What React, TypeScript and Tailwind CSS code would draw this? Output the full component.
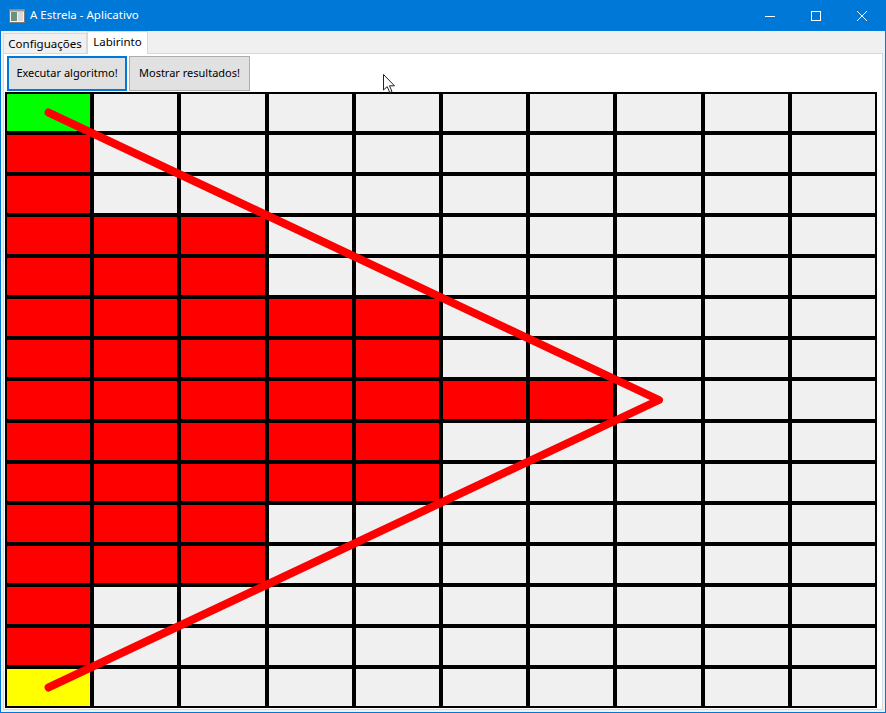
import React from "react";

// maze grid: 15 rows x 10 columns
// 0 = free, 1 = wall (red), 2 = start, 3 = goal
const ROWS = 15;
const COLS = 10;

function cellKind(r: number, c: number): number {
  if (r === 0 && c === 0) return 2;
  if (r === 14 && c === 0) return 3;
  if (c === 0 && r >= 1 && r <= 13) return 1;
  if ((c === 1 || c === 2) && r >= 3 && r <= 11) return 1;
  if ((c === 3 || c === 4) && r >= 5 && r <= 9) return 1;
  if ((c === 5 || c === 6) && r === 7) return 1;
  return 0;
}

const cellColor: Record<number, string> = {
  0: "bg-[#f0f0f0]",
  1: "bg-[#ff0000]",
  2: "bg-[#00ff00]",
  3: "bg-[#ffff00]",
};

function TitleBar() {
  return (
    <div className="h-[31px] flex items-center text-white text-[11.5px]">
      <svg width="16" height="14" viewBox="0 0 16 14" className="ml-[9px]">
        <rect x="0.5" y="0.5" width="15" height="13" fill="#f4f4f4" stroke="#7a7a7a" />
        <rect x="2" y="3" width="6" height="9" fill="#6f8f7f" />
        <rect x="9" y="3" width="5" height="9" fill="#d9d9d9" />
        <rect x="0.5" y="0.5" width="15" height="2" fill="#9a9a9a" />
      </svg>
      <span className="ml-[5px] pb-[1px]">A Estrela - Aplicativo</span>
      <div className="ml-auto flex items-center h-full">
        <div className="w-[46px] h-full flex items-center justify-center">
          <svg width="10" height="10" viewBox="0 0 10 10">
            <line x1="0" y1="5.5" x2="10" y2="5.5" stroke="white" strokeWidth="1" />
          </svg>
        </div>
        <div className="w-[46px] h-full flex items-center justify-center">
          <svg width="10" height="10" viewBox="0 0 10 10">
            <rect x="0.5" y="0.5" width="9" height="9" fill="none" stroke="white" strokeWidth="1" />
          </svg>
        </div>
        <div className="w-[46px] h-full flex items-center justify-center mr-[1px]">
          <svg width="10" height="10" viewBox="0 0 10 10">
            <path d="M0 0 L10 10 M10 0 L0 10" stroke="white" strokeWidth="1" />
          </svg>
        </div>
      </div>
    </div>
  );
}

function Maze() {
  const w = 872;
  const h = 616;
  const cw = w / COLS;
  const rh = h / ROWS;
  const pts = [
    [0.5 * cw, 0.5 * rh],
    [7.5 * cw, 7.5 * rh],
    [0.5 * cw, 14.5 * rh],
  ]
    .map((p) => p.join(","))
    .join(" ");

  return (
    <div className="relative ml-[1px] mt-[1px] w-[872px] h-[616px]">
      <div className="grid grid-cols-10 grid-rows-15 w-full h-full">
        {Array.from({ length: ROWS * COLS }).map((_, i) => {
          const r = Math.floor(i / COLS);
          const c = i % COLS;
          return (
            <div key={i} className={`border-2 border-black ${cellColor[cellKind(r, c)]}`} />
          );
        })}
      </div>
      <svg
        className="absolute inset-0 pointer-events-none"
        width={w}
        height={h}
        viewBox={`0 0 ${w} ${h}`}
      >
        <polyline
          points={pts}
          fill="none"
          stroke="#ff0000"
          strokeWidth="8"
          strokeLinecap="round"
          strokeLinejoin="round"
        />
      </svg>
    </div>
  );
}

export default function App() {
  return (
    <div
      className="relative w-[886px] h-[713px] bg-[#0078d7] flex flex-col overflow-hidden"
      style={{ fontFamily: '"Noto Sans", "Open Sans", sans-serif' }}
    >
      <TitleBar />
      <div className="flex-1 mx-[1px] mb-[1px] bg-[#f0f0f0] flex flex-col">
        {/* tabs */}
        <div className="h-[22px] flex items-end pl-[2px] text-[11.5px] text-black">
          <div className="h-[20px] w-[84px] border border-b-0 border-[#d9d9d9] bg-[#f0f0f0] flex items-center justify-center">
            Configuações
          </div>
          <div className="relative z-10 h-[23px] -mb-px w-[61px] border border-b-0 border-[#d9d9d9] bg-white flex items-center justify-center pb-[3px]">
            Labirinto
          </div>
        </div>
        {/* page */}
        <div className="flex-1 ml-[2px] mr-[2px] mb-[2px] border border-[#d9d9d9] bg-white flex flex-col">
          <div className="flex gap-[2px] pl-[3px] pt-[2px] text-[11px] text-black">
            <button className="h-[35px] w-[120px] border-2 border-[#0078d7] bg-[#e1e1e1]">
              Executar algoritmo!
            </button>
            <button className="h-[35px] w-[121px] border border-[#adadad] bg-[#e1e1e1]">
              Mostrar resultados!
            </button>
          </div>
          <Maze />
        </div>
      </div>
      {/* mouse pointer */}
      <svg className="absolute left-[383px] top-[74px]" width="13" height="20" viewBox="0 0 13 20">
        <path
          d="M0.5 0.5 L0.5 16 L4.2 12.6 L6.8 18.6 L9 17.6 L6.5 11.8 L11.5 11.8 Z"
          fill="white"
          stroke="#222"
          strokeWidth="1"
          strokeLinejoin="miter"
        />
      </svg>
    </div>
  );
}
